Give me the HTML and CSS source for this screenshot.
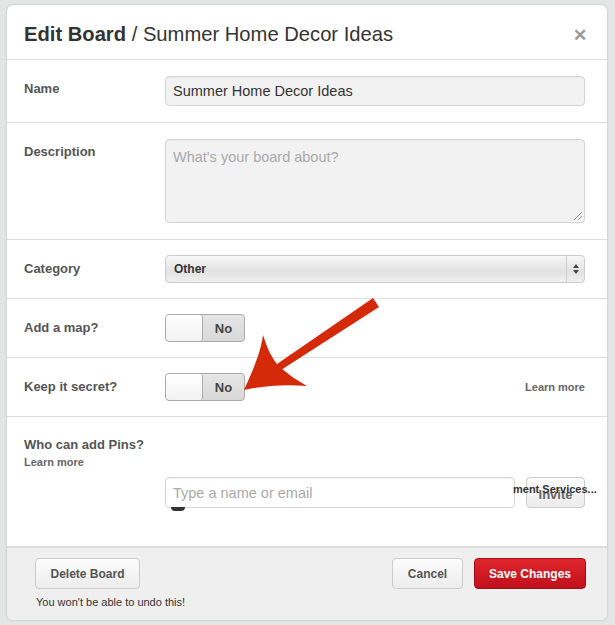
FILE: index.html
```html
<!DOCTYPE html>
<html>
<head>
<meta charset="utf-8">
<link rel="stylesheet" href="styles.css">
</head>
<body>
<div class="modal">
  <div class="header">
    <h1><b>Edit Board</b> / Summer Home Decor Ideas</h1>
    <span class="close">&#x2715;</span>
  </div>
  <div class="row row-name">
    <label class="lbl">Name</label>
    <div class="field">Summer Home Decor Ideas</div>
  </div>
  <div class="row row-desc">
    <label class="lbl">Description</label>
    <div class="field area placeholder">What's your board about?<span class="grip"></span></div>
  </div>
  <div class="row row-cat">
    <label class="lbl">Category</label>
    <div class="select"><span>Other</span><span class="arrows"><svg width="8" height="12" viewBox="0 0 8 12"><path d="M4 1 L7 5 L1 5 Z M4 11 L7 7 L1 7 Z" fill="#444"/></svg></span></div>
  </div>
  <div class="row row-toggle">
    <label class="lbl">Add a map?</label>
    <div class="toggle"><span class="knob"></span><span class="tval">No</span></div>
  </div>
  <div class="row row-toggle">
    <label class="lbl">Keep it secret?</label>
    <div class="secret">
      <div class="toggle"><span class="knob"></span><span class="tval">No</span></div>
      <a class="learn">Learn more</a>
    </div>
  </div>
  <div class="row row-who">
    <div class="whocol">
      <label class="lbl">Who can add Pins?</label>
      <a class="learn small">Learn more</a>
    </div>
    <div class="invite-line">
      <div class="field invite-input placeholder">Type a name or email</div>
      <button class="btn invite">Invite</button>
      <span class="overtext">ment Services...</span>
      <span class="avatar"></span>
    </div>
  </div>
  <div class="footer">
    <div class="del">
      <button class="btn big">Delete Board</button>
      <p class="warn">You won't be able to undo this!</p>
    </div>
    <div class="actions">
      <button class="btn big">Cancel</button>
      <button class="btn big red">Save Changes</button>
    </div>
  </div>
  <svg class="arrow" width="160" height="110" viewBox="0 0 160 110">
    <path d="M140 6 L146 15 L48 78 L44 72 Z" fill="#d42a0a"/>
    <path d="M11 98 C 22 74, 28 58, 30 43 C 34 55, 37 63, 44 72 C 52 80, 60 86, 74 94 C 50 92, 30 94, 11 98 Z" fill="#d42a0a"/>
  </svg>
</div>
</body>
</html>
```
FILE: styles.css
```css
* { box-sizing: border-box; }
html, body { margin: 0; padding: 0; }
body {
  background: #e4e6e6;
  font-family: "Liberation Sans", Arial, Helvetica, sans-serif;
  color: #333;
  width: 615px;
  height: 625px;
  overflow: hidden;
  padding: 5px 8px 0 7px;
}
.modal {
  position: relative;
  width: 600px;
  background: #fff;
  border-radius: 6px;
  box-shadow: 0 0 2px rgba(0,0,0,0.25);
  overflow: hidden;
}
.header {
  height: 55px;
  border-bottom: 1px solid #ddd;
  display: flex;
  align-items: center;
  justify-content: space-between;
  padding: 0 20px 0 17px;
}
.header h1 {
  margin: 0;
  font-size: 20.2px;
  font-weight: normal;
  color: #333;
  padding-top: 5px;
}
.header h1 b { font-weight: bold; }
.close {
  font-size: 17px;
  color: #999;
  font-weight: bold;
  padding-top: 6px;
}
.row {
  display: grid;
  grid-template-columns: 141px 1fr;
  padding: 16px 22px 16px 17px;
  border-bottom: 1px solid #ddd;
}
.lbl {
  font-size: 13px;
  font-weight: bold;
  color: #555;
  padding-top: 5px;
}
.field {
  height: 30px;
  background: #f2f2f2;
  border: 1px solid #d4d4d4;
  border-radius: 4px;
  font-size: 14.5px;
  color: #333;
  padding: 6px 7px;
  box-shadow: inset 0 1px 1px rgba(0,0,0,0.04);
}
.placeholder { color: #aaa; }
.row-desc { padding-bottom: 16px; }
.area {
  height: 84px;
  position: relative;
  padding-top: 9px;
}
.grip {
  position: absolute;
  right: 2px;
  bottom: 2px;
  width: 8px;
  height: 8px;
  background: linear-gradient(135deg, transparent 45%, #999 45%, #999 52%, transparent 52%, transparent 70%, #999 70%, #999 77%, transparent 77%);
}
.row-cat { padding-top: 15px; padding-bottom: 15px; }
.row-cat .lbl { padding-top: 6px; }
.select {
  height: 28px;
  border: 1px solid #ccc;
  border-radius: 4px;
  background: linear-gradient(#f6f6f6, #e2e2e2 60%, #f0f0f0);
  display: flex;
  justify-content: space-between;
  align-items: center;
  font-size: 12px;
  font-weight: bold;
  color: #333;
  padding-left: 8px;
}
.arrows {
  width: 18px;
  height: 100%;
  border-left: 1px solid #ccc;
  display: flex;
  align-items: center;
  justify-content: center;
}
.row-toggle { padding-top: 15px; padding-bottom: 15px; }
.row-toggle .lbl { padding-top: 6px; }
.toggle {
  width: 80px;
  height: 28px;
  border: 1px solid #aaa;
  border-radius: 4px;
  background: linear-gradient(#e6e6e6, #d8d8d8);
  display: flex;
  align-items: center;
  overflow: hidden;
}
.knob {
  width: 37px;
  height: 100%;
  background: linear-gradient(#fff, #f2f2f2);
  border-right: 1px solid #aaa;
  border-radius: 3px;
}
.tval {
  flex: 1;
  text-align: center;
  font-size: 13px;
  font-weight: bold;
  color: #444;
}
.secret {
  display: flex;
  justify-content: space-between;
  align-items: center;
}
.learn {
  font-size: 11px;
  font-weight: bold;
  color: #666;
}
.row-who {
  display: block;
  padding-top: 20px;
  padding-bottom: 38px;
}
.whocol {
  display: flex;
  flex-direction: column;
}
.whocol .lbl { padding-top: 0; }
.learn.small { margin-top: 4px; }
.invite-line {
  position: relative;
  display: flex;
  margin-left: 141px;
  margin-top: 9px;
  gap: 11px;
}
.invite-input {
  width: 350px;
  height: 31px;
  background: #fff;
  padding-top: 7px;
}
.btn {
  font-family: "Liberation Sans", Arial, sans-serif;
  border: 1px solid #ccc;
  border-radius: 4px;
  background: linear-gradient(#fdfdfd, #ececec);
  color: #555;
  font-weight: bold;
  font-size: 12px;
  cursor: pointer;
}
.invite {
  width: 59px;
  height: 31px;
  padding: 0;
  padding-top: 4px;
  color: #666;
  font-size: 13px;
}
.overtext {
  position: absolute;
  left: 348px;
  top: 6px;
  font-size: 11px;
  font-weight: bold;
  color: #333;
  white-space: nowrap;
}
.avatar {
  position: absolute;
  left: 6px;
  top: 30px;
  width: 14px;
  height: 4px;
  border-radius: 0 0 7px 7px;
  background: #333;
}
.footer {
  background: #efefef;
  border-top: 1px solid #ddd;
  height: 73px;
  display: flex;
  justify-content: space-between;
  padding: 10px 21px 0 28px;
}
.big {
  height: 31px;
  padding: 0 16px;
}
.del .big { width: 105px; padding: 0; }
.warn {
  margin: 7px 0 0 1px;
  font-size: 11px;
  color: #333;
}
.actions {
  display: flex;
  gap: 11px;
}
.actions .big:first-child { width: 71px; padding: 0; }
.red {
  width: 112px;
  padding: 0;
  background: linear-gradient(#e0252e, #c0101c);
  border-color: #a80c16;
  color: #fff;
}
.arrow {
  position: absolute;
  left: 226px;
  top: 287px;
}
```
